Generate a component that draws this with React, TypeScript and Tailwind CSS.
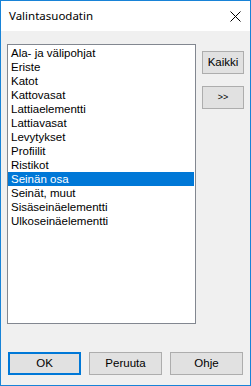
import React from 'react';

const items = [
  'Ala- ja välipohjat',
  'Eriste',
  'Katot',
  'Kattovasat',
  'Lattiaelementti',
  'Lattiavasat',
  'Levytykset',
  'Profiilit',
  'Ristikot',
  'Seinän osa',
  'Seinät, muut',
  'Sisäseinäelementti',
  'Ulkoseinäelementti',
];

const btnBase =
  "flex items-center justify-center bg-[#e1e1e1] border border-[#adadad] text-black font-['Liberation_Sans',Arial,sans-serif]";
const btn = `${btnBase} text-[11.5px]`;

export default function App() {
  return (
    <div className="w-[251px] h-[386px] border border-[#1883d7] bg-[#f0f0f0] flex flex-col">
      <div className="h-[30px] bg-white flex items-center justify-between pl-[8px] pr-[9px]">
        <span className="text-[11.5px] text-black font-['Noto_Sans',sans-serif] pb-[1px]">Valintasuodatin</span>
        <svg width="11" height="11" viewBox="0 0 11 11" className="mt-[1px]">
          <path d="M0.5 0.5 L10.5 10.5 M10.5 0.5 L0.5 10.5" stroke="#000" strokeWidth="1" />
        </svg>
      </div>

      <div className="flex-1 flex flex-col px-[6px] pt-[13px] pb-[10px]">
        <div className="flex gap-[6px]">
          <div className="w-[189px] h-[280px] bg-white border border-[#828790] pt-[1px] pr-[1px]">
            {items.map((it) => {
              const sel = it === 'Seinän osa';
              return (
                <div
                  key={it}
                  className={
                    sel
                      ? "h-[14px] leading-[14px] pl-[3px] text-[11.5px] bg-[#0078d7] text-white font-['Liberation_Sans',Arial,sans-serif]"
                      : "h-[14px] leading-[14px] pl-[3px] text-[11.5px] text-black font-['Liberation_Sans',Arial,sans-serif]"
                  }
                >
                  {it}
                </div>
              );
            })}
          </div>
          <div className="flex flex-col gap-[12px] pt-[7px]">
            <div className={`${btn} w-[42px] h-[23px]`}>Kaikki</div>
            <div className={`${btnBase} w-[42px] h-[23px] text-[9px]`}>&gt;&gt;</div>
          </div>
        </div>

        <div className="flex-1" />

        <div className="flex gap-[8px] ml-[1px]">
          <div className="w-[73px] h-[23px] flex items-center justify-center bg-[#e1e1e1] border-2 border-[#0078d7] text-[11.5px] text-black font-['Liberation_Sans',Arial,sans-serif]">
            OK
          </div>
          <div className={`${btn} w-[73px] h-[23px]`}>Peruuta</div>
          <div className={`${btn} w-[73px] h-[23px]`}>Ohje</div>
        </div>
      </div>
    </div>
  );
}
